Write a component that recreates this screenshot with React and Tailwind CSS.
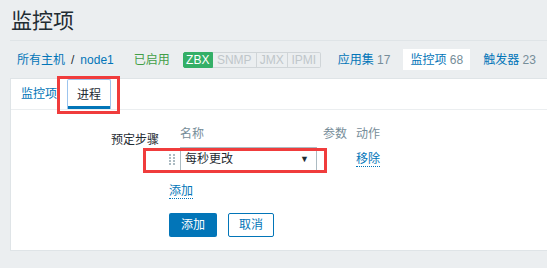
import React from 'react';

const font = { fontFamily: '"Liberation Sans", Arial, "Noto Sans CJK SC", sans-serif' };

const DragHandle = () => (
    <div className="grid grid-cols-2 gap-x-[2px] gap-y-[1px] w-[6px]">
        {Array.from({ length: 8 }).map((_, i) => (
            <div key={i} className="w-[2px] h-[2px] bg-[#acbbc2]" />
        ))}
    </div>
);

const App = () => {
    return (
        <div className="relative w-[547px] h-[268px] overflow-hidden bg-[#ebeef0] text-[12px] text-[#1f2c33]" style={font}>
            {/* Header */}
            <div className="ml-[10px] h-[41px] border-b border-[#dfe4e7] flex items-center">
                <h1 className="text-[21px] leading-none pl-[1px] text-[#1f2c33]">监控项</h1>
            </div>

            {/* Host nav */}
            <div className="h-[37px] flex items-center pl-[17px]">
                <a className="text-[#0275b8]">所有主机</a>
                <span className="mx-[6px] text-[#1f2c33]">/</span>
                <a className="text-[#0275b8]">node1</a>
                <span className="ml-[20px] text-[#429e47]">已启用</span>
                <div className="ml-[13px] flex h-[16px] text-[12px] leading-[14px]">
                    <span className="px-[2px] w-[30px] text-center bg-[#34af67] text-white border border-[#34af67] rounded-l-[2px]">ZBX</span>
                    <span className="w-[44px] text-center text-[#bfc6ca] border border-[#d0d5d8] border-l-0">SNMP</span>
                    <span className="w-[31px] text-center text-[#bfc6ca] border border-[#d0d5d8] border-l-0">JMX</span>
                    <span className="w-[33px] text-center text-[#bfc6ca] border border-[#d0d5d8] border-l-0 rounded-r-[2px]">IPMI</span>
                </div>
                <a className="ml-[17px] text-[#0275b8]">应用集 <span className="text-[#768d99]">17</span></a>
                <div className="ml-[13px] h-[21px] px-[7px] bg-white flex items-center">
                    <a className="text-[#0275b8]">监控项 <span className="text-[#768d99]">68</span></a>
                </div>
                <a className="ml-[13px] text-[#0275b8]">触发器 <span className="text-[#768d99]">23</span></a>
            </div>

            {/* Panel */}
            <div className="ml-[10px] h-[173px] bg-white border border-r-0 border-[#dfe4e7]">
                {/* Tabs */}
                <div className="h-[31px] flex items-end border-b border-[#ebeef0] pl-[10px]">
                    <div className="h-[30px] flex items-center text-[#0275b8]">监控项</div>
                    <div className="ml-[10px] w-[44px] h-[30px] flex items-center justify-center border border-[#9cc4ee] border-b-0 rounded-t-[2px] relative">
                        <span>进程</span>
                        <div className="absolute left-0 right-0 bottom-0 h-[3px] bg-[#0275b8]" />
                    </div>
                </div>

                {/* Form */}
                <div className="pt-[16px] flex">
                    <div className="w-[148px] text-right pt-[5px] text-[#1f2c33]">预定步骤</div>
                    <div className="ml-[10px] flex flex-col">
                        <div className="flex h-[16px] items-center text-[#768d99]">
                            <div className="w-[11px]" />
                            <div className="w-[143px]">名称</div>
                            <div className="w-[33px]">参数</div>
                            <div>动作</div>
                        </div>
                        <div className="mt-[5px] flex items-center h-[24px]">
                            <div className="w-[11px] flex items-center"><DragHandle /></div>
                            <div className="w-[137px] h-[24px] border border-[#acbbc2] flex items-center justify-between pl-[4px] pr-[7px] text-[#1f2c33]">
                                <span>每秒更改</span>
                                <span className="text-[9px] leading-none">▼</span>
                            </div>
                            <div className="w-[39px]" />
                            <a className="text-[#0275b8] border-b border-dotted border-[#0275b8] leading-[14px]">移除</a>
                        </div>
                        <div className="mt-[11px] h-[14px]">
                            <a className="text-[#0275b8] border-b border-dotted border-[#0275b8] leading-[14px]">添加</a>
                        </div>
                        <div className="mt-[17px] flex gap-[11px]">
                            <button className="w-[48px] h-[24px] bg-[#0275b8] text-white rounded-[2px]">添加</button>
                            <button className="w-[46px] h-[24px] bg-white border border-[#0275b8] text-[#0275b8] rounded-[2px]">取消</button>
                        </div>
                    </div>
                </div>
            </div>

            {/* Annotation boxes */}
            <div className="absolute left-[57px] top-[76px] w-[63px] h-[38px] border-[3px] border-[#f03c3c]" />
            <div className="absolute left-[143px] top-[148px] w-[184px] h-[25px] border-[3px] border-[#f03c3c]" />
        </div>
    );
};

export default App;
